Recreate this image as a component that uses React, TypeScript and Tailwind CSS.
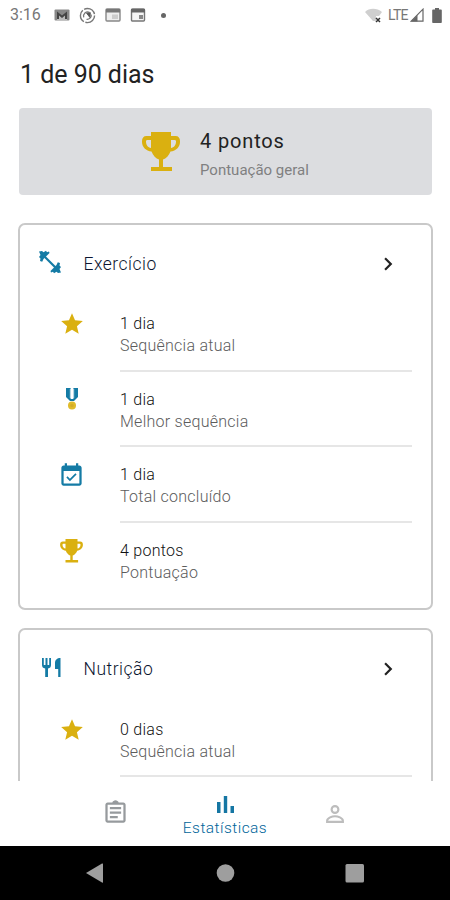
import type { ReactNode } from "react";

type IconProps = { className?: string };

function TrophyIcon({ className }: IconProps) {
  return (
    <svg viewBox="0 0 38 40" className={className} fill="#dab010">
      <path
        fillRule="evenodd"
        d="M9 0h20v4h4.500C36.500 4 38 6 38 9v1c0 5-4 9-9.500 9.500C27 23.500 24 26.500 21 27.500V35h9v4H9v-4h8v-7.500C14 26.500 11 23.500 9.500 19.500 4 19 0 15 0 10V9c0-3 1.500-5 4.500-5H9zM9 8H5.500C4.500 8 4 8.500 4 9.500c0 3.500 2 6 5 6.500zm20 0v8c3-.5 5-3 5-6.500 0-1-.5-1.500-1.500-1.500z"
      />
    </svg>
  );
}

function StarIcon() {
  return (
    <svg viewBox="0 0 24 24" className="size-[26px]" fill="#dab010">
      <path d="M12 17.270 18.180 21l-1.640-7.030L22 9.240l-7.190-.610L12 2 9.190 8.630 2 9.240l5.460 4.730L5.820 21z" />
    </svg>
  );
}

function MedalIcon() {
  return (
    <svg viewBox="0 0 14 24" className="mb-0.5 h-6 w-3.5">
      <path d="M1 1h12v9l-4 4H5l-4-4z" fill="#147ba5" />
      <path d="M4.800 2h1v9h-1zM8.200 2h1v9h-1z" fill="#a5cbdc" />
      <path d="M5.600 1h2.800v11H5.600z" fill="#fff" />
      <circle cx="7" cy="18.500" r="4" fill="#e0bb2b" />
      <circle cx="7" cy="18.500" r="1.700" fill="#d3ac28" />
    </svg>
  );
}

function CalendarIcon() {
  return (
    <svg viewBox="0 0 24 24" className="size-[27px]" fill="#147ba5">
      <path d="M16.530 11.060 15.470 10l-4.880 4.880-2.120-2.120-1.060 1.060L10.590 17zM19 3h-1V1h-2v2H8V1H6v2H5c-1.110 0-2 .9-2 2v14c0 1.100.89 2 2 2h14c1.100 0 2-.9 2-2V5c0-1.100-.9-2-2-2zm0 16H5V8h14z" />
    </svg>
  );
}

function DumbbellIcon() {
  return (
    <svg viewBox="0 0 24 24" className="mb-1 -ml-0.5 size-6" fill="#147ba5">
      <path d="M5 5l14 14" stroke="#147ba5" strokeWidth="2.200" />
      <path d="M1 1.500 4 1l1.500 1.200L8 .8l1 1.400 2-.7.500 1.500-2 2L7.500 7l-2 2-1.300 2.700L2 11l.5-2.500L1 7l1.500-2z" />
      <path d="M23 22.500 20 23l-1.500-1.200L16 23.200l-1-1.400-2 .7-.5-1.500 2-2 2-2 2-2 1.300-2.700L22 13l-.5 2.500L23 17l-1.500 2z" />
    </svg>
  );
}

function CutleryIcon() {
  return (
    <svg viewBox="0 0 20 20" className="mb-0.5 ml-0.5 size-5" fill="#147ba5">
      <path d="M0 0h1.800v7h1.700V0h2v7h1.700V0H9v7c0 2-1 3.200-3 3.500V19H3.200v-8.500C1 10.200 0 9 0 7z" />
      <path d="M18.500 0v19h-2.300v-8H13V5c0-3 2-5 5.500-5z" />
    </svg>
  );
}

function ChevronIcon() {
  return (
    <svg viewBox="0 0 24 24" className="size-[26px]" fill="#222">
      <path d="M8.590 16.580 13.170 12 8.590 7.410 10 6l6 6-6 6z" />
    </svg>
  );
}

function StatusBar() {
  return (
    <div className="flex h-[30px] shrink-0 items-center pl-[10px] text-[#777]">
      <span className="w-[44px] text-[16px] leading-[30px]">3:16</span>
      <svg viewBox="0 0 16 12" className="h-3 w-4">
        <rect x="0.500" y="0.500" width="15" height="11" rx="1" fill="#888" />
        <path d="M3 11V4l5 4 5-4v7z" fill="#bbb" />
        <path d="M3 2.500l5 4 5-4V10h-2V6.500L8 9 5 6.500V10H3z" fill="#444" />
      </svg>
      <svg viewBox="0 0 18 18" className="ml-[9px] size-[17px]" fill="none" stroke="#777">
        <circle cx="9" cy="9" r="7.500" strokeWidth="1.500" strokeDasharray="14 1.700" />
        <path d="M5 11A4.500 4.500 0 0 1 11 5.500M13 8a4.500 4.500 0 0 1-5 5" strokeWidth="1.300" />
        <path d="M8 6.500l4-.5-.5 5z" fill="#555" stroke="#555" strokeWidth="1" />
      </svg>
      <svg viewBox="0 0 16 14" className="ml-[9px] h-3.5 w-4">
        <rect x="1" y="1" width="14" height="12" rx="1" fill="#eee" stroke="#888" strokeWidth="1.400" />
        <path d="M1 1h14v3.500H1z" fill="#777" />
        <path d="M7 6.500h6V11H7z" fill="#ccc" />
      </svg>
      <svg viewBox="0 0 16 14" className="ml-[9px] h-3.5 w-4">
        <rect x="1.500" y="1" width="13" height="12" rx="1" fill="#f5f5f5" stroke="#777" strokeWidth="1.400" />
        <path d="M1 1h14v3.500H1z" fill="#666" />
        <path d="M9 7h4v4H9z" fill="#888" />
      </svg>
      <span className="ml-[15px] size-[5px] rounded-full bg-[#666]" />
      <svg viewBox="0 0 18 15" className="ml-auto h-[15px] w-[18px]">
        <path d="M0 4C4-.3 12-.3 17 4l-3 4h-3v5H8z" fill="#cfcfcf" />
        <path d="M11 10l4 4M15 10l-4 4" stroke="#333" strokeWidth="1.500" />
      </svg>
      <span className="ml-[5px] w-[22px] text-[14px] leading-[30px] tracking-[-0.700px]">LTE</span>
      <svg viewBox="0 0 14 14" className="h-3.5 w-3.5">
        <path d="M1.200 13.200 13 1.200v12z" fill="none" stroke="#666" strokeWidth="1.200" />
        <path d="M1 13.500 7.500 7v6.500z" fill="#666" />
      </svg>
      <svg viewBox="0 0 10 15" className="mr-[8px] ml-[8px] h-[15px] w-[10px]" fill="#666">
        <path d="M3 0h4v1.500h2c.5 0 .8.300.8.800v11.900c0 .5-.3.800-.8.800H1c-.5 0-.8-.3-.8-.8V2.300c0-.5.300-.8.800-.8h2z" />
      </svg>
    </div>
  );
}

type Stat = { icon: ReactNode; value: string; label: string };

function StatCard({ icon, title, stats }: { icon: ReactNode; title: string; stats: Stat[] }) {
  return (
    <section className="mr-[17px] ml-[18px] shrink-0 rounded-[7px] border-2 border-[#c9c9c9] bg-white pb-[10px]">
      <div className="flex h-[71.500px] items-center pt-[7px] pr-[30px] pl-5">
        <span className="flex w-[43.500px] items-center">{icon}</span>
        <h2 className="text-[17.500px] font-light tracking-[0.500px] text-[#0b1530]">{title}</h2>
        <span className="ml-auto">
          <ChevronIcon />
        </span>
      </div>
      {stats.map((stat, i) => (
        <div key={stat.label} className="flex h-[75.500px]">
          <div className="flex w-[100px] justify-center pt-[15px] pl-[3px]">
            <span className="flex h-[26px] items-center">{stat.icon}</span>
          </div>
          <div
            className={
              i < 3
                ? "mr-[19px] flex-1 border-b-2 border-[#e6e6e6] pt-[17px]"
                : "mr-[19px] flex-1 pt-[17px]"
            }
          >
            <p className="text-[16px] leading-[22px] font-light tracking-[0.260px] text-[#111]">{stat.value}</p>
            <p className="text-[16px] leading-[22px] font-light tracking-[0.260px] text-[#5c5c5c]">{stat.label}</p>
          </div>
        </div>
      ))}
    </section>
  );
}

const exerciseStats: Stat[] = [
  { icon: <StarIcon />, value: "1 dia", label: "Sequência atual" },
  { icon: <MedalIcon />, value: "1 dia", label: "Melhor sequência" },
  { icon: <CalendarIcon />, value: "1 dia", label: "Total concluído" },
  { icon: <TrophyIcon className="h-[24px] w-[23px]" />, value: "4 pontos", label: "Pontuação" },
];

const nutritionStats: Stat[] = [
  { icon: <StarIcon />, value: "0 dias", label: "Sequência atual" },
];

function TabBar() {
  return (
    <nav className="grid h-[65px] shrink-0 grid-cols-[60px_110px_110px_110px_60px] bg-white">
      <div className="col-start-2 flex items-center justify-center pb-0.5">
        <svg viewBox="0 0 24 24" className="size-[27px]" fill="#969a9d">
          <path d="M7 15h7v2H7zm0-4h10v2H7zm0-4h10v2H7zm12-4h-4.180C14.400 1.840 13.300 1 12 1s-2.400.84-2.820 2H5c-1.100 0-2 .9-2 2v14c0 1.100.9 2 2 2h14c1.100 0 2-.9 2-2V5c0-1.100-.9-2-2-2zm0 16H5V5h14z" />
        </svg>
      </div>
      <div className="flex flex-col items-center pt-[15px]">
        <svg viewBox="0 0 17 17" className="size-[17px]" fill="#1576a3">
          <path d="M0 6h3.500v11H0zM6.800 0h3.400v17H6.800zM13.500 10H17v7h-3.500z" />
        </svg>
        <span className="text-[15.500px] leading-[30px] font-light tracking-[0.450px] text-[#00659a]">
          Estatísticas
        </span>
      </div>
      <div className="flex items-center justify-center">
        <svg viewBox="4 4 16 16" className="size-[18px]" fill="none" stroke="#bdbdbd" strokeWidth="1.900">
          <circle cx="12" cy="8" r="3" />
          <path d="M5 19v-1c0-2.700 4.700-4 7-4s7 1.300 7 4v1z" />
        </svg>
      </div>
    </nav>
  );
}

function SystemNav() {
  return (
    <div className="flex h-[54px] shrink-0 items-center bg-black pl-[86px]">
      <svg viewBox="0 0 279 20" className="h-5 w-[279px]" fill="#9e9e9e">
        <path d="M0 10 16 .6q1-.5 1 .5v18q0 1-1 .5z" />
        <circle cx="139.500" cy="10" r="8.800" />
        <rect x="259.500" y="1" width="18.500" height="18.500" rx="1.500" />
      </svg>
    </div>
  );
}

export default function App() {
  return (
    <div className="flex h-[900px] w-[450px] flex-col overflow-hidden bg-white font-['Roboto',sans-serif]">
      <StatusBar />
      <main className="flex min-h-0 flex-1 flex-col overflow-hidden">
        <h1 className="mt-[28px] ml-[20px] text-[25px] leading-[34px] tracking-[-0.030px] text-[#222]">
          1 de 90 dias
        </h1>
        <div className="mt-[16px] mr-[18px] ml-[19px] flex h-[87px] shrink-0 items-center rounded-[4px] bg-[#dcdde0] pl-[123px]">
          <TrophyIcon className="h-10 w-[38px]" />
          <div className="ml-[20px] pt-[7px]">
            <p className="text-[20px] leading-[30px] tracking-[0.850px] text-[#222]">4 pontos</p>
            <p className="text-[15px] leading-[28px] text-[#808080]">Pontuação geral</p>
          </div>
        </div>
        <div className="mt-[27.500px] flex flex-col gap-[18px]">
          <StatCard icon={<DumbbellIcon />} title="Exercício" stats={exerciseStats} />
          <StatCard icon={<CutleryIcon />} title="Nutrição" stats={nutritionStats} />
        </div>
      </main>
      <TabBar />
      <SystemNav />
    </div>
  );
}
